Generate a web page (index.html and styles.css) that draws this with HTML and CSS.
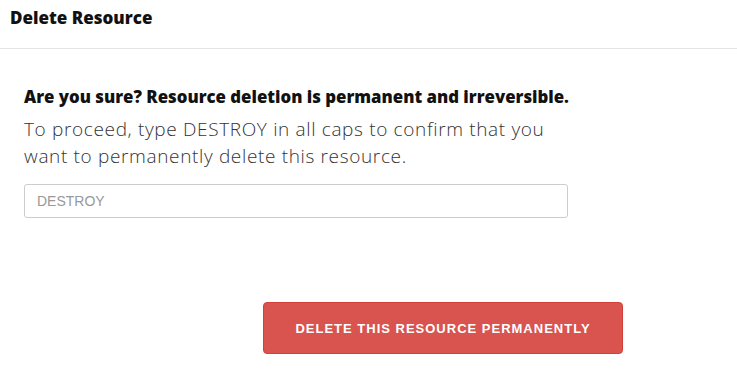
FILE: index.html
```html
<!DOCTYPE html>
<html lang="en">
<head>
<meta charset="UTF-8" />
<title>Delete Resource</title>
<link rel="stylesheet" href="styles.css">
</head>
<body>

<div class="modal-header">
  <h2>Delete Resource</h2>
</div>

<div class="modal-body">
  <p class="warning">Are you sure? Resource deletion is permanent and irreversible.</p>
  <p class="hint">To proceed, type DESTROY in all caps to confirm that you want to permanently delete this resource.</p>
  <input type="text" class="confirm-input" placeholder="DESTROY" />
</div>

<div class="modal-footer">
  <button class="btn-danger">DELETE THIS RESOURCE PERMANENTLY</button>
</div>

</body>
</html>
```

FILE: styles.css
```css
body {
  margin: 0;
  background: #fff;
  font-family: "Open Sans", "Noto Sans", sans-serif;
  color: #222;
}
.modal-header {
  height: 48px;
  border-bottom: 1px solid #e5e5e5;
  padding: 0 10px;
}
.modal-header h2 {
  margin: 0;
  padding-top: 6px;
  font-size: 17px;
  font-weight: 800;
  color: #111;
}
.modal-body {
  padding: 36px 24px 0;
  width: 545px;
}
.warning {
  margin: 0 0 8px;
  font-size: 16.8px;
  font-weight: 800;
  color: #111;
}
.hint {
  margin: 0 0 14px;
  font-size: 19px;
  font-weight: 300;
  letter-spacing: 0.65px;
  line-height: 27px;
  color: #333;
}
.confirm-input {
  box-sizing: border-box;
  width: 544px;
  height: 34px;
  padding: 0 12px;
  border: 1px solid #ccc;
  border-radius: 3px;
  font-family: "Liberation Sans", Arial, sans-serif;
  font-size: 14px;
}
.confirm-input::placeholder {
  color: #999;
}
.modal-footer {
  padding: 84px 0 0 263px;
}
.btn-danger {
  width: 360px;
  height: 52px;
  background: #d9534f;
  border: 1px solid #d43f3a;
  border-radius: 4px;
  color: #fff;
  font-family: "Liberation Sans", Arial, sans-serif;
  font-size: 13px;
  font-weight: bold;
  letter-spacing: 1px;
  cursor: pointer;
}
```
